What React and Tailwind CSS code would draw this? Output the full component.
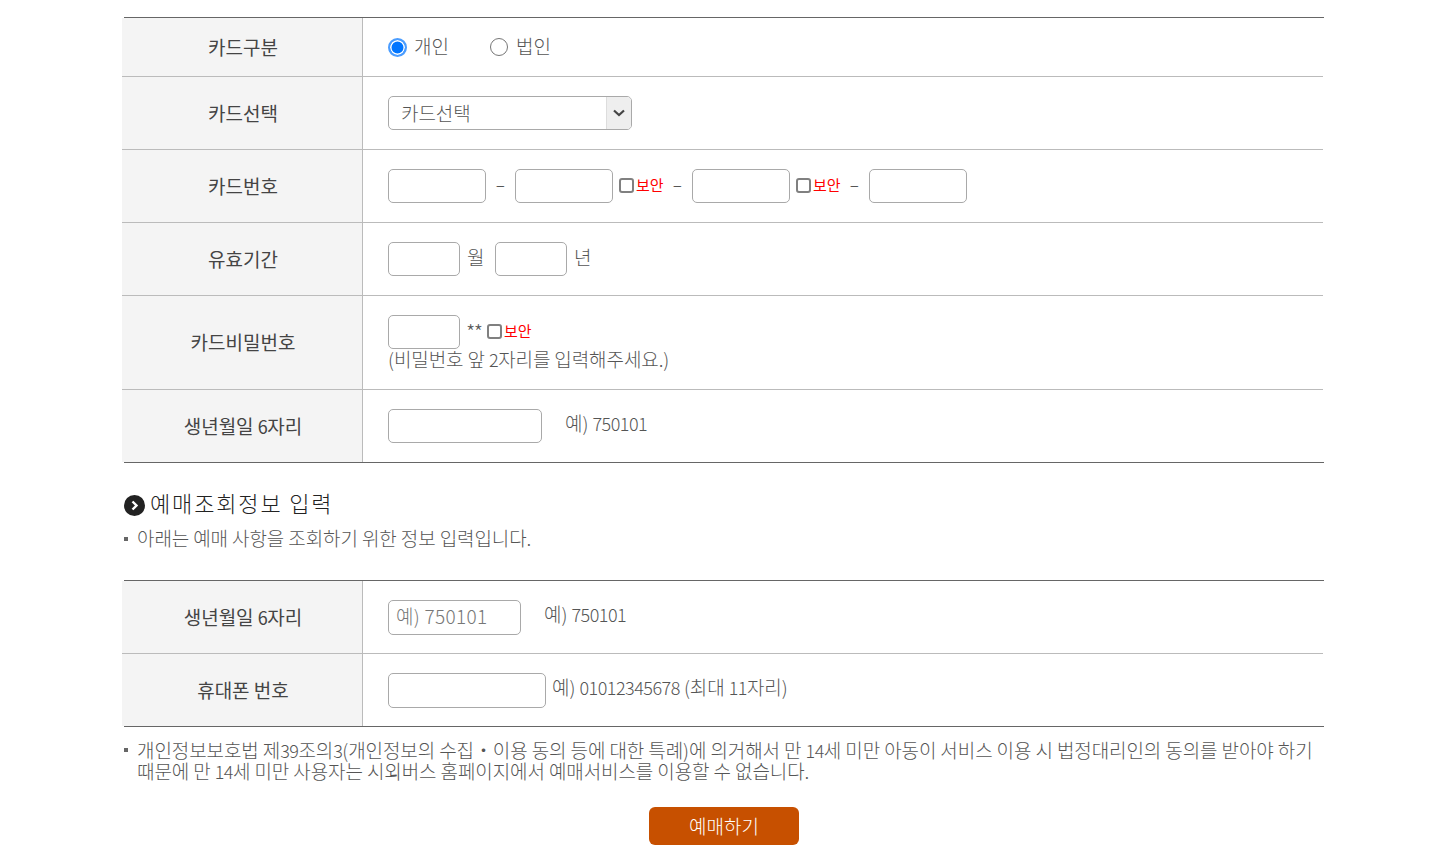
import React from "react";

const FONT = "font-['Noto_Sans_CJK_KR','Liberation_Sans',sans-serif]";

// digits run narrow in the reference, hangul runs wide
function Num({ children }) {
  return <span className="text-[18px] leading-none tracking-[-0.5px]">{children}</span>;
}

function Row({ label, h, children, last }) {
  return (
    <div className={`flex ${h} ${last ? "" : "border-b border-[#bbbbbb]"}`}>
      <div className="w-[241px] shrink-0 bg-[#f4f4f4] border-r border-[#bbbbbb] flex items-center justify-center text-[19px] font-normal tracking-[0px] text-[#444444]">
        <span className="pl-[2px]">{label}</span>
      </div>
      <div className="flex-1 pl-[25px]">{children}</div>
    </div>
  );
}

function Field({ w, placeholder }) {
  return (
    <input
      placeholder={placeholder}
      className={`${w} h-[34px] shrink-0 rounded-[5px] border border-[#a9a9a9] bg-white px-[7px] text-[19px] font-light text-[#555555] placeholder:text-[#777777] outline-none`}
    />
  );
}

function Secure() {
  return (
    <label className="flex items-center shrink-0 w-[44px] -mt-[1px]">
      <input type="checkbox" className="appearance-none w-[15px] h-[15px] m-0 rounded-[3px] border-2 border-[#808080] bg-white shrink-0" />
      <span className="ml-[2px] text-[15px] font-normal tracking-[0px] text-[#ff0000] whitespace-nowrap">보안</span>
    </label>
  );
}

function Dash() {
  return (
    <span className="w-[29px] shrink-0 -mt-[3px] text-center text-[#555555]">
      <span className="inline-block scale-x-[1.6]">-</span>
    </span>
  );
}

function Table({ children }) {
  return (
    <div className="ml-[124px] w-[1200px] border-y border-[#666666]">
      <div className="-ml-[2px] w-[1201px]">{children}</div>
    </div>
  );
}

export default function App() {
  return (
    <div className={`${FONT} w-[1429px] h-[850px] overflow-hidden bg-white pt-[17px] text-[19px] font-light tracking-[-0.1px] text-[#555555]`}>
      <Table>
        <Row label="카드구분" h="h-[59px]">
          <div className="flex items-center h-full">
            <input
              type="radio"
              name="cardType"
              defaultChecked
              className="appearance-none w-[19px] h-[19px] m-0 rounded-full border-2 border-[#4b9dff] bg-[#0075ff] shadow-[inset_0_0_0_1.5px_#ffffff]"
            />
            <span className="ml-[7px] w-[76px] -mt-[2px]">개인</span>
            <input type="radio" name="cardType" className="w-[18px] h-[18px] m-0" />
            <span className="ml-[8px] -mt-[2px]">법인</span>
          </div>
        </Row>
        <Row label="카드선택" h="h-[73px]">
          <div className="flex items-center h-full">
            <div className="relative w-[244px] h-[34px]">
              <select className="w-full h-full appearance-none rounded-[5px] border border-[#a9a9a9] bg-white pl-[12px] text-[19px] font-light text-[#555555] outline-none">
                <option>카드선택</option>
              </select>
              <span className="absolute right-px top-px bottom-px w-[25px] rounded-r-[4px] border-l border-[#dddddd] bg-[#eeeeee] flex items-center justify-center">
                <svg width="12" height="8" viewBox="0 0 12 8" fill="none">
                  <path d="M1 1.5 6 6 11 1.5" stroke="#444444" strokeWidth="2.2" />
                </svg>
              </span>
            </div>
          </div>
        </Row>
        <Row label="카드번호" h="h-[73px]">
          <div className="flex items-center h-full">
            <Field w="w-[98px]" />
            <Dash />
            <Field w="w-[98px]" />
            <span className="w-[6px]" />
            <Secure />
            <Dash />
            <Field w="w-[98px]" />
            <span className="w-[6px]" />
            <Secure />
            <Dash />
            <Field w="w-[98px]" />
          </div>
        </Row>
        <Row label="유효기간" h="h-[73px]">
          <div className="flex items-center h-full">
            <Field w="w-[72px]" />
            <span className="ml-[7px] w-[28px] -mt-[3px]">월</span>
            <Field w="w-[72px]" />
            <span className="ml-[7px] -mt-[3px]">년</span>
          </div>
        </Row>
        <Row label="카드비밀번호" h="h-[94px]">
          <div className="pt-[19px]">
            <div className="flex items-center h-[34px]">
              <Field w="w-[72px]" />
              <span className="ml-[6px] w-[21px] text-[21px] leading-none tracking-[-1.5px]">**</span>
              <Secure />
            </div>
            <p className="-mt-[1px] leading-[22px]">(비밀번호 앞 <Num>2</Num>자리를 입력해주세요.)</p>
          </div>
        </Row>
        <Row label={<>생년월일 <Num>6</Num>자리</>} h="h-[72px]" last>
          <div className="flex items-center h-full">
            <Field w="w-[154px]" />
            <span className="ml-[23px] -mt-[5px]">예) <Num>750101</Num></span>
          </div>
        </Row>
      </Table>

      <div className="ml-[124px] mt-[27px] flex items-center h-[28px]">
        <svg width="21" height="21" viewBox="0 0 21 21" className="mt-[2px] shrink-0">
          <circle cx="10.5" cy="10.5" r="10.5" fill="#222222" />
          <path d="M8.5 6.5 12.5 10.5 8.5 14.5" fill="none" stroke="#ffffff" strokeWidth="2.4" />
        </svg>
        <h3 className="ml-[5px] mb-[4px] text-[22px] font-light tracking-[1.85px] text-[#222222]">예매조회정보 입력</h3>
      </div>
      <div className="ml-[124px] mt-[10px] flex items-center h-[22px]">
        <span className="w-[4px] h-[4px] bg-[#666666] mr-[9px]" />
        <p className="mb-[2px]">아래는 예매 사항을 조회하기 위한 정보 입력입니다.</p>
      </div>

      <div className="mt-[30px]">
        <Table>
          <Row label={<>생년월일 <Num>6</Num>자리</>} h="h-[73px]">
            <div className="flex items-center h-full">
              <input
                placeholder="예) 750101"
                className="w-[133px] h-[35px] rounded-[5px] border border-[#a9a9a9] bg-white px-[7px] pb-[3px] text-[19px] font-light tracking-[0.3px] outline-none placeholder:text-[#777777]"
              />
              <span className="ml-[23px] -mt-[6px]">예) <Num>750101</Num></span>
            </div>
          </Row>
          <Row label="휴대폰 번호" h="h-[72px]" last>
            <div className="flex items-center h-full">
              <input className="w-[158px] h-[35px] rounded-[5px] border border-[#a9a9a9] bg-white outline-none" />
              <span className="ml-[6px] -mt-[6px]">예) <Num>01012345678</Num> (최대 <Num>11</Num>자리)</span>
            </div>
          </Row>
        </Table>
      </div>

      <div className="ml-[124px] mt-[12px] w-[1200px] flex">
        <span className="w-[4px] h-[4px] bg-[#666666] mt-[9px] mr-[9px] shrink-0" />
        <p className="leading-[21px] whitespace-nowrap">
          개인정보보호법 제<Num>39</Num>조의<Num>3</Num>(개인정보의 수집・이용 동의 등에 대한 특례)에 의거해서 만 <Num>14</Num>세 미만 아동이 서비스 이용 시 법정대리인의 동의를 받아야 하기
          <br />
          때문에 만 <Num>14</Num>세 미만 사용자는 시외버스 홈페이지에서 예매서비스를 이용할 수 없습니다.
        </p>
      </div>

      <div className="ml-[124px] w-[1200px] mt-[26px] flex justify-center">
        <button className="w-[150px] h-[38px] rounded-[6px] bg-[#c75000] text-[19px] tracking-[0px] font-light text-white">예매하기</button>
      </div>
    </div>
  );
}
